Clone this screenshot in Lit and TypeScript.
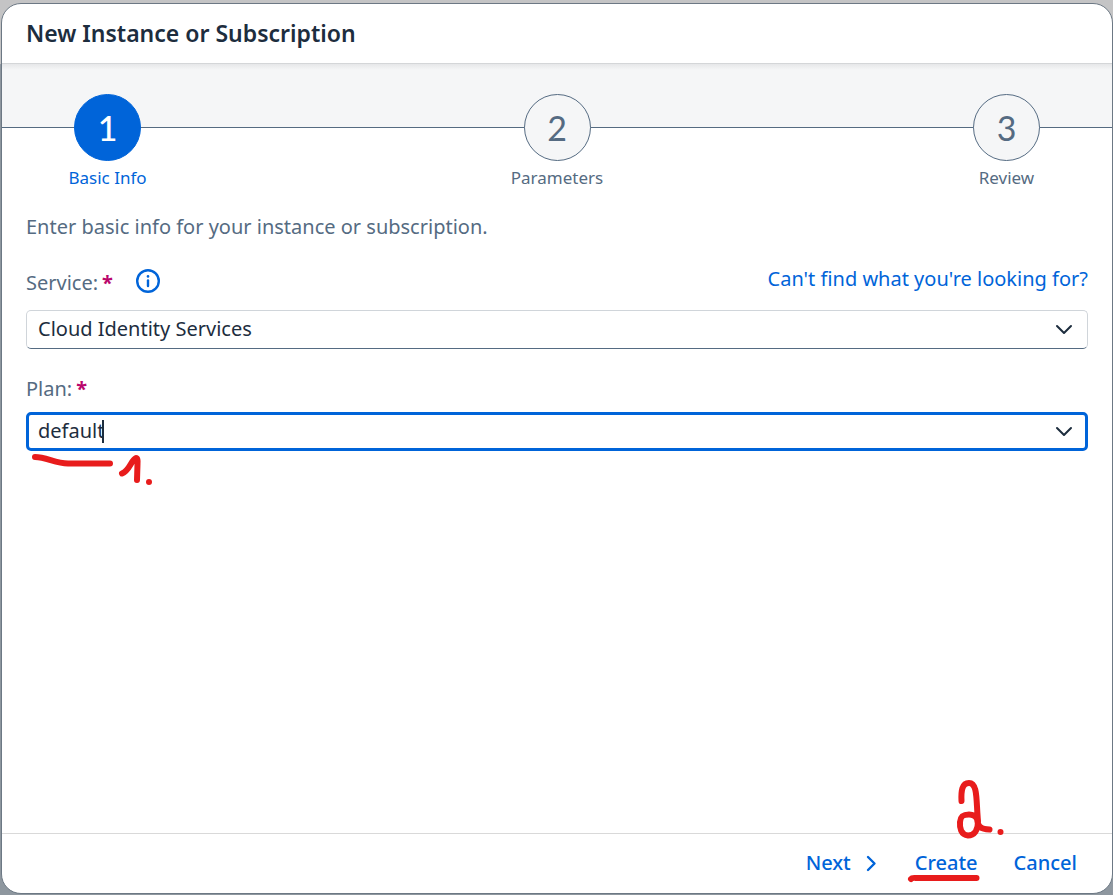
import { LitElement, html, css, svg } from "lit";
import { customElement, property } from "lit/decorators.js";

const chevronDown = svg`<path d="M2 5 L9 12 L16 5" />`;

@customElement("wizard-steps")
export class WizardSteps extends LitElement {
  @property({ type: Array }) steps: string[] = [];
  @property({ type: Number }) current = 1;

  static styles = css`
    :host {
      display: block;
    }
    .steps {
      display: flex;
      justify-content: space-between;
      margin: 0;
      padding: 30px 72px 0;
      list-style: none;
      background:
        linear-gradient(#e6e7e9, #f5f6f7) 0 0 / 100% 6px no-repeat,
        linear-gradient(#f5f6f7 63px, #556b81 63px, #556b81 64px, #ffffff 64px);
    }
    .step {
      display: flex;
      flex-direction: column;
      align-items: center;
      width: 67px;
      color: #556b82;
      font-size: 17px;
      line-height: 24px;
      white-space: nowrap;
    }
    .circle {
      box-sizing: border-box;
      display: flex;
      align-items: center;
      justify-content: center;
      width: 67px;
      height: 67px;
      margin-bottom: 5px;
      padding: 0;
      border: 1px solid #556b82;
      border-radius: 50%;
      background: #f5f6f7;
      color: inherit;
      font-family: Lato, sans-serif;
      font-size: 34px;
      line-height: 40px;
    }
    .current {
      color: #0064d9;
    }
    .current .circle {
      border-color: #0064d9;
      background: #0064d9;
      color: #ffffff;
      font-weight: 500;
    }
  `;

  render() {
    return html`
      <ol class="steps">
        ${this.steps.map(
          (label, i) => html`
            <li class="step ${i + 1 === this.current ? "current" : ""}">
              <button class="circle" type="button" aria-label=${label}>${i + 1}</button>
              <span>${label}</span>
            </li>
          `,
        )}
      </ol>
    `;
  }
}

@customElement("app-root")
export class AppRoot extends LitElement {
  static styles = css`
    :host {
      box-sizing: border-box;
      display: flex;
      min-height: 100vh;
      padding: 3px 0 1px 1px;
      background: linear-gradient(#c4c4c5 64px, #8e979f 64px);
      color: #1d2d3e;
      font-family: "Noto Sans", "Open Sans", sans-serif;
      font-size: 20px;
      line-height: 24px;
    }
    .dialog {
      display: flex;
      flex: 1;
      flex-direction: column;
      overflow: hidden;
      border: 1px solid #6c7884;
      border-radius: 20px;
      background: #ffffff;
    }
    .header {
      padding: 17px 24px 18px;
      border-bottom: 1px solid #d4d6d8;
    }
    .title {
      margin: 0;
      font-size: 23px;
      font-weight: 600;
      line-height: 24px;
    }
    .body {
      display: flex;
      flex: 1;
      flex-direction: column;
      padding: 25px 24px 0;
    }
    .message {
      margin: 0 0 28px;
      color: #556b82;
    }
    .label-row {
      display: flex;
      align-items: flex-end;
      height: 28px;
      margin-bottom: 15px;
    }
    .label {
      color: #556b82;
    }
    .plan-label {
      margin: 28px 0 11px;
    }
    .required {
      margin-left: 4px;
      color: #ba066c;
      font-weight: 700;
    }
    .info {
      display: flex;
      align-self: center;
      margin-left: 23px;
      padding: 0;
      border: 0;
      background: none;
    }
    .link {
      align-self: flex-start;
      margin-left: auto;
      color: #0064d9;
      text-decoration: none;
    }
    .field {
      position: relative;
      box-sizing: border-box;
      display: flex;
      align-items: center;
      height: 39px;
      padding: 0 10px 0 11px;
      border: 1px solid #d0d5da;
      border-bottom-color: #556b82;
      border-radius: 5px;
      background: #ffffff;
    }
    .focused {
      padding: 0 8px 0 9px;
      border: 3px solid #0064d9;
    }
    .input {
      field-sizing: content;
      padding: 0 0 2px;
      border: 0;
      outline: 0;
      background: none;
      color: #1d2d3e;
      font: inherit;
    }
    .caret {
      width: 2px;
      height: 23px;
      margin-left: -2px;
      background: #1d2d3e;
    }
    .arrow {
      display: flex;
      margin-left: auto;
      padding: 4px;
      border: 0;
      background: none;
    }
    .icon {
      fill: none;
      stroke: #1d2d3e;
      stroke-width: 2;
      stroke-linecap: round;
      stroke-linejoin: round;
    }
    .blue {
      stroke: #0064d9;
      stroke-width: 2.4;
    }
    .footer {
      display: flex;
      align-items: center;
      justify-content: flex-end;
      gap: 36px;
      height: 59px;
      padding: 0 35px;
      border-top: 1px solid #d9d9d9;
    }
    .action {
      position: relative;
      display: flex;
      align-items: center;
      gap: 14px;
      padding: 0 0 2px;
      border: 0;
      background: none;
      color: #0064d9;
      font: inherit;
      font-weight: 500;
    }
    .ink {
      position: absolute;
      fill: none;
      stroke: #e81c1c;
      stroke-width: 6;
      stroke-linecap: round;
      stroke-linejoin: round;
      pointer-events: none;
    }
    .dot {
      fill: #e81c1c;
      stroke: none;
    }
    .ink-plan {
      top: 37px;
      left: 0;
    }
    .ink-create {
      right: -28px;
      bottom: -7px;
    }
  `;

  private arrow(label: string) {
    return html`
      <button class="arrow" type="button" aria-label=${label}>
        <svg class="icon" width="18" height="18" viewBox="0 0 18 18">${chevronDown}</svg>
      </button>
    `;
  }

  render() {
    return html`
      <section class="dialog" role="dialog" aria-labelledby="title">
        <header class="header">
          <h1 class="title" id="title">New Instance or Subscription</h1>
        </header>
        <wizard-steps .steps=${["Basic Info", "Parameters", "Review"]} .current=${1}></wizard-steps>
        <main class="body">
          <p class="message">Enter basic info for your instance or subscription.</p>
          <div class="label-row">
            <label class="label" for="service">Service:<span class="required">*</span></label>
            <button class="info" type="button" aria-label="Service information">
              <svg class="icon blue" width="24" height="24" viewBox="0 0 24 24">
                <circle cx="12" cy="12" r="10.800" />
                <path d="M12 11.5V17" />
                <path d="M12 7.3V7.4" stroke-width="2.6" />
              </svg>
            </button>
            <a class="link" href="#">Can't find what you're looking for?</a>
          </div>
          <div class="field">
            <input class="input" id="service" role="combobox" .value=${"Cloud Identity Services"} />
            ${this.arrow("Open services")}
          </div>
          <label class="label plan-label" for="plan">Plan:<span class="required">*</span></label>
          <div class="field focused">
            <input class="input" id="plan" role="combobox" .value=${"default"} />
            <span class="caret"></span>
            ${this.arrow("Open plans")}
            <svg class="ink ink-plan" width="130" height="40" viewBox="29 452 130 40" aria-hidden="true">
              <path d="M35 457 C46 457 55 463 68 463.500 H110" />
              <path d="M122 473.500 C130 470 131 460 136 458 Q138 458 137.500 464 L137 480" />
              <circle class="dot" cx="149" cy="482" r="3" />
            </svg>
          </div>
        </main>
        <footer class="footer">
          <button class="action" type="button">
            Next
            <svg class="icon blue" width="14" height="18" viewBox="0 0 14 18">
              <path d="M3 3 L9.500 9.500 L3 16" />
            </svg>
          </button>
          <button class="action" type="button">
            Create
            <svg class="ink ink-create" width="100" height="108" viewBox="905 775 100 108" aria-hidden="true">
              <path d="M910 878 Q911 876.500 915 877 H975.500" />
              <path
                d="M960.500 800 C960 790 961 782 968 782 C977 782 975 800 977 820 C977 830 973 834.500 967 834.500 C960 834 958.500 827 959 821 C959.500 815 962 813.500 968 813.500 Q974 813.500 976 818 C977 826 980 828 988.500 828.500"
              />
              <circle class="dot" cx="999.500" cy="831" r="3" />
            </svg>
          </button>
          <button class="action" type="button">Cancel</button>
        </footer>
      </section>
    `;
  }
}
